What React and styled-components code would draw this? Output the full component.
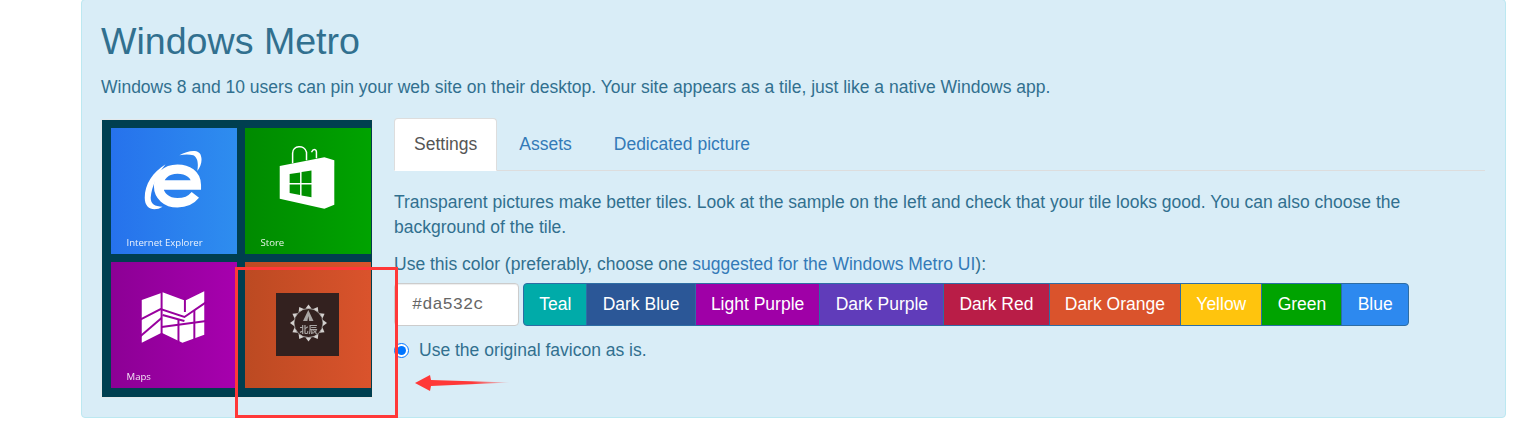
import React from 'react'
import styled, { createGlobalStyle } from 'styled-components'

const GlobalStyle = createGlobalStyle`
html, body {
  margin: 0;
  background: #fff;
}
body {
  font-family: "Liberation Sans", Arial, sans-serif;
  font-size: 17.5px;
  line-height: 25px;
  color: #31708f;
}
`

const colors = [
  { name: 'Teal', value: '#00aba9' },
  { name: 'Dark Blue', value: '#2b5797' },
  { name: 'Light Purple', value: '#9f00a7' },
  { name: 'Dark Purple', value: '#603cba' },
  { name: 'Dark Red', value: '#b91d47' },
  { name: 'Dark Orange', value: '#da532c' },
  { name: 'Yellow', value: '#ffc40d' },
  { name: 'Green', value: '#00a300' },
  { name: 'Blue', value: '#2d89ef' },
]

const teeth = Array.from({ length: 12 }, (_, i) => i * 30)

function IeIcon() {
  return (
    <TileIcon viewBox="0 0 127 105">
      <path
        d="M48 57 H86 C86 46 77 41 67 41 C55 41 48 49 48 58 C48 68 56 75 67 75 C75 75 81 72 85 67"
        fill="none"
        stroke="#fff"
        strokeWidth="9.5"
      />
      <path d="M34 70 C34 56 42 44 55 36 C47 46 41 58 40 70 C40 76 44 79 52 79 C44 84 34 82 34 70 Z" fill="#fff" />
      <path d="M69 27 C78 22 90 20 91 29 C92 34 90 39 87 43 C88 36 88 30 83 27 C79 26 74 26 69 27 Z" fill="#fff" />
    </TileIcon>
  )
}

function StoreIcon() {
  return (
    <TileIcon viewBox="0 0 127 105">
      <path d="M48 35 V25 C48 17 60 16 62 24 V32 M67 24 C69 20 72 21 72 24 C72 25 72 28 72 30" fill="none" stroke="#fff" strokeWidth="1.5" />
      <path d="M35 38 L80 29 L90 32 V77 L80 81 L35 71 Z" fill="#fff" />
      <path d="M45 46 L55.5 44.5 V55 H45 Z M57 44 L67 42.5 V55 H57 Z M45 56.5 H55.5 V67 L45 65 Z M57 56.5 H67 V69.5 L57 67.5 Z" fill="#009000" />
    </TileIcon>
  )
}

function MapsIcon() {
  return (
    <TileIcon viewBox="0 0 127 105">
      <path d="M31 38 L50 31 L52 30 L73 38 L76 38 L94 29 V73 L72 81 L51 71 L31 81 Z" fill="#fff" />
      <g fill="none" stroke="#98009e" strokeWidth="2">
        <path d="M51 28 V73" />
        <path d="M74.5 35 V50" />
        <path d="M68 58 V82" />
        <path d="M84 48 V78" />
        <path d="M29 58 L50 47 L74 55 L96 40" />
        <path d="M51 65 L96 59" />
        <path d="M29 75 L51 56" />
        <path d="M52 53 L74 59" />
      </g>
    </TileIcon>
  )
}

function BadgeIcon() {
  return (
    <BadgeArt viewBox="0 0 63 63">
      <circle cx="32.5" cy="30" r="14.5" fill="none" stroke="#9a9593" strokeWidth="1" />
      {teeth.map((angle) => (
        <path
          key={angle}
          d="M32.5 11.5 L35.5 15.5 H29.5 Z"
          fill="#d4d1cf"
          transform={`rotate(${angle} 32.5 30)`}
        />
      ))}
      <path d="M32.3 17 L37.5 28 H33.2 L32.3 23 L31.4 28 H27 Z" fill="#a9a5a3" />
      <BadgeText x="32.5" y="40">北辰</BadgeText>
    </BadgeArt>
  )
}

export default function App() {
  return (
    <>
      <GlobalStyle />
      <Page>
        <Panel>
          <Title>Windows Metro</Title>
          <Lead>
            Windows 8 and 10 users can pin your web site on their desktop. Your site appears as a tile, just like a native Windows app.
          </Lead>
          <Columns>
            <Preview>
              <Tile $from="#2672ec" $to="#2e8def">
                <IeIcon />
                <TileLabel>Internet Explorer</TileLabel>
              </Tile>
              <Tile $from="#008a00" $to="#00a300">
                <StoreIcon />
                <TileLabel>Store</TileLabel>
              </Tile>
              <Tile $from="#8c0095" $to="#a700ae">
                <MapsIcon />
                <TileLabel>Maps</TileLabel>
              </Tile>
              <FaviconTile $from="#bc4a22" $to="#da532c">
                <Badge>
                  <BadgeIcon />
                </Badge>
              </FaviconTile>
            </Preview>
            <Settings>
              <Tabs>
                <Tab $active>Settings</Tab>
                <Tab>Assets</Tab>
                <Tab>Dedicated picture</Tab>
              </Tabs>
              <Hint>
                Transparent pictures make better tiles. Look at the sample on the left and check that your tile looks good. You can also choose the background of the tile.
              </Hint>
              <ColorHint>
                Use this color (preferably, choose one <a>suggested for the Windows Metro UI</a>):
              </ColorHint>
              <ColorRow>
                <ColorInput defaultValue="#da532c" />
                <ColorGroup>
                  {colors.map((color) => (
                    <ColorButton key={color.name} $color={color.value}>{color.name}</ColorButton>
                  ))}
                </ColorGroup>
              </ColorRow>
              <RadioLine>
                <input type="radio" defaultChecked />
                Use the original favicon as is.
              </RadioLine>
            </Settings>
          </Columns>
        </Panel>
        <RedBox />
        <RedArrow viewBox="0 0 98 18">
          <defs>
            <linearGradient id="arrowFade" x1="0" x2="1" y1="0" y2="0">
              <stop offset="0.6" stopColor="#ff3838" />
              <stop offset="1" stopColor="#ff3838" stopOpacity="0.1" />
            </linearGradient>
          </defs>
          <path d="M1 9 L16 1 L17 6 L96 8.5 L17 12 L16 17 Z" fill="url(#arrowFade)" />
        </RedArrow>
      </Page>
    </>
  )
}

const Page = styled.div`
position: relative;
height: 434px;
padding-left: 81px;
overflow: hidden;
box-sizing: border-box;
`
const Panel = styled.div`
width: 1425px;
height: 419px;
margin-top: -1px;
padding: 21px 20px 20px 19px;
box-sizing: border-box;
background: #d9edf7;
border: 1px solid #bce8f1;
border-radius: 4px;
`
const Title = styled.h1`
margin: 0;
font-size: 37.6px;
font-weight: 500;
line-height: 40px;
`
const Lead = styled.p`
margin: 14px 0 20px;
`
const Columns = styled.div`
display: flex;
gap: 22px;
margin-left: 1px;
`
const Preview = styled.div`
width: 270px;
height: 277px;
flex: none;
box-sizing: border-box;
padding: 8px 9px;
display: grid;
grid-template-columns: 126px 126px;
grid-auto-rows: 126px;
gap: 8px;
background: #003f50;
box-shadow: 0 0 0 1px #e3e8ea;
`
const Tile = styled.div`
background: linear-gradient(to right, ${(p) => p.$from}, ${(p) => p.$to});
color: #fff;
`
const FaviconTile = styled(Tile)`
display: flex;
align-items: center;
justify-content: center;
padding: 0 1px 1px 0;
`
const TileIcon = styled.svg`
display: block;
width: 126px;
height: 105px;
filter: blur(0.4px);
`
const TileLabel = styled.div`
padding-left: 15.5px;
font-family: "Open Sans", "Liberation Sans", sans-serif;
font-size: 9.6px;
line-height: 20px;
opacity: 0.9;
filter: blur(0.3px);
`
const Badge = styled.div`
width: 63px;
height: 63px;
background: #33211f;
`
const BadgeArt = styled.svg`
display: block;
width: 63px;
height: 63px;
filter: blur(0.4px);
`
const BadgeText = styled.text`
font-family: "Noto Sans CJK SC", sans-serif;
font-size: 9px;
font-weight: 700;
fill: #a9a5a3;
text-anchor: middle;
`
const Settings = styled.div`
flex: 1;
min-width: 0;
margin-top: -2px;
`
const Tabs = styled.div`
display: flex;
gap: 2px;
height: 53px;
box-sizing: border-box;
border-bottom: 1px solid #ddd;
`
const Tab = styled.a`
height: 53px;
box-sizing: border-box;
padding: 13px 19px 0;
border: 1px solid ${(p) => (p.$active ? '#ddd' : 'transparent')};
border-bottom-color: transparent;
border-radius: 4px 4px 0 0;
background: ${(p) => (p.$active ? '#fff' : 'transparent')};
color: ${(p) => (p.$active ? '#555' : '#337ab7')};
`
const Hint = styled.p`
margin: 19px 0 0;
`
const ColorHint = styled.p`
margin: 12px 0 0;
a {
  color: #337ab7;
}
`
const ColorRow = styled.div`
display: flex;
gap: 4px;
margin-top: 6px;
`
const ColorInput = styled.input`
width: 125px;
height: 43px;
box-sizing: border-box;
padding: 0 17px;
border: 1px solid #ccc;
border-radius: 4px;
background: #fff;
color: #666;
font-family: "Liberation Mono", monospace;
font-size: 17px;
box-shadow: inset 0 1px 1px rgba(0, 0, 0, 0.075);
`
const ColorGroup = styled.div`
display: flex;
height: 43px;
`
const ColorButton = styled.button`
padding: 0 15.2px;
margin-left: -1px;
border: 1px solid #2e6da4;
background: ${(p) => p.$color};
color: #fff;
font-family: inherit;
font-size: 17.5px;
white-space: nowrap;
&:first-child {
  margin-left: 0;
  border-radius: 4px 0 0 4px;
}
&:last-child {
  border-radius: 0 4px 4px 0;
}
`
const RadioLine = styled.label`
display: flex;
align-items: center;
gap: 10px;
margin-top: 12px;
input {
  width: 15px;
  height: 15px;
  margin: 0;
  accent-color: #0075ff;
}
`
const RedBox = styled.div`
position: absolute;
left: 235px;
top: 267px;
width: 163px;
height: 151px;
box-sizing: border-box;
border: 3px solid #ff3838;
`
const RedArrow = styled.svg`
position: absolute;
left: 414px;
top: 374px;
width: 98px;
height: 18px;
`
